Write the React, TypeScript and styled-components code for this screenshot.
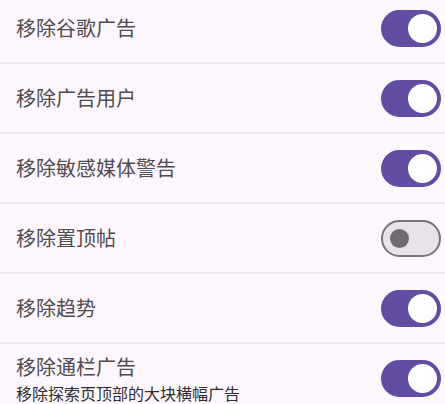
import React, { FC, useState } from "react";
import styled, { createGlobalStyle } from "styled-components";

const GlobalStyle = createGlobalStyle`
  html, body {
    margin: 0;
    padding: 0;
    background: #fdf7fd;
    overflow: hidden;
  }
  body {
    font-family: "Noto Sans CJK SC", "Noto Sans", sans-serif;
  }
`;

const List = styled.div`
  margin-top: -6px;
  display: flex;
  flex-direction: column;
`;

const Row = styled.div`
  height: 70px;
  box-sizing: border-box;
  display: flex;
  align-items: center;
  justify-content: space-between;
  padding: 0 4px 0 16px;
  border-bottom: 2px solid #ece6ee;
`;

const Texts = styled.div`
  display: flex;
  flex-direction: column;
`;

const Title = styled.span`
  font-size: 20px;
  line-height: 26px;
  color: #4f4c52;
`;

const Sub = styled.span`
  font-size: 16px;
  line-height: 20px;
  color: #2e2c31;
  margin-top: 3px;
`;

const Track = styled.button<{ $on: boolean }>`
  width: 60px;
  height: 37px;
  box-sizing: border-box;
  border-radius: 19px;
  padding: 0;
  cursor: pointer;
  flex-shrink: 0;
  background: ${(p) => (p.$on ? "#624da3" : "#e8e2ea")};
  border: 2px solid ${(p) => (p.$on ? "#624da3" : "#78747c")};
  display: flex;
  align-items: center;
  justify-content: ${(p) => (p.$on ? "flex-end" : "flex-start")};
`;

const Thumb = styled.span<{ $on: boolean }>`
  display: block;
  border-radius: 50%;
  width: ${(p) => (p.$on ? "29px" : "19px")};
  height: ${(p) => (p.$on ? "29px" : "19px")};
  margin: ${(p) => (p.$on ? "0 2px 0 0" : "0 0 0 7px")};
  background: ${(p) => (p.$on ? "#ffffff" : "#6f6b73")};
`;

interface ItemProps {
  title: string;
  sub?: string;
  defaultOn: boolean;
}

const Item: FC<ItemProps> = ({ title, sub, defaultOn }) => {
  const [on, setOn] = useState(defaultOn);
  return (
    <Row>
      <Texts>
        <Title>{title}</Title>
        {sub && <Sub>{sub}</Sub>}
      </Texts>
      <Track $on={on} onClick={() => setOn(!on)}>
        <Thumb $on={on} />
      </Track>
    </Row>
  );
};

const items: ItemProps[] = [
  { title: "移除谷歌广告", defaultOn: true },
  { title: "移除广告用户", defaultOn: true },
  { title: "移除敏感媒体警告", defaultOn: true },
  { title: "移除置顶帖", defaultOn: false },
  { title: "移除趋势", defaultOn: true },
  { title: "移除通栏广告", sub: "移除探索页顶部的大块横幅广告", defaultOn: true },
];

const App: FC = () => {
  return (
    <>
      <GlobalStyle />
      <List>
        {items.map((it) => (
          <Item key={it.title} {...it} />
        ))}
      </List>
    </>
  );
};

export default App;
